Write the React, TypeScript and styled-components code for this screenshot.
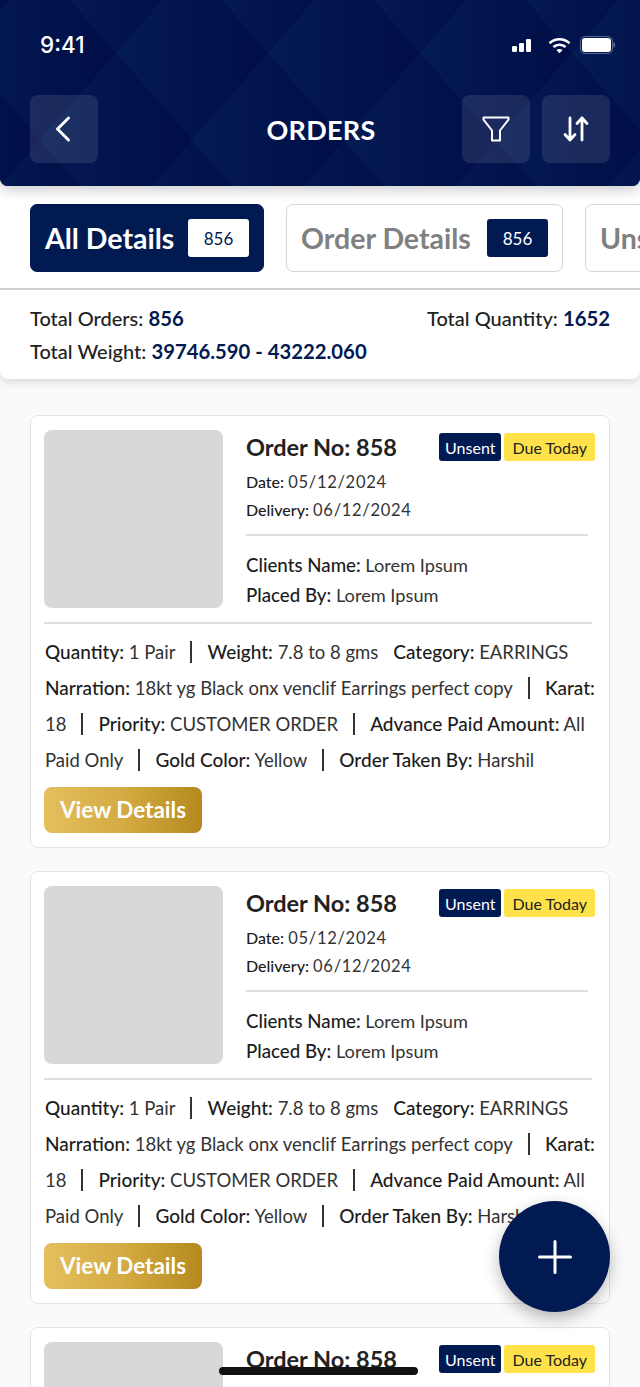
import React, { FunctionComponent } from "react";
import styled, { createGlobalStyle } from "styled-components";

const NAVY = "#021a52";

const GlobalStyle = createGlobalStyle`
  html, body {
    margin: 0;
    padding: 0;
    height: 1387px;
    overflow: hidden;
    background: #fafafa;
    font-family: "Lato", "Noto Sans", sans-serif;
  }
`;

const Screen = styled.div`
  position: relative;
  width: 640px;
  height: 1387px;
  overflow: hidden;
  background: #fafafa;
`;

const Header = styled.header`
  position: relative;
  z-index: 3;
  height: 186px;
  box-sizing: border-box;
  background: #01124b;
  border-radius: 0 0 8px 8px;
  box-shadow: 0 5px 12px rgba(0, 0, 0, 0.18);
  overflow: hidden;
`;

const HeaderPattern = styled.svg`
  position: absolute;
  inset: 0;
  width: 100%;
  height: 100%;
`;

const StatusBar = styled.div`
  position: relative;
  height: 95px;
  box-sizing: border-box;
  padding: 30px 25px 0 40px;
  display: flex;
  justify-content: space-between;
  align-items: flex-start;
`;

const Clock = styled.span`
  font-family: "Inter", "Roboto", sans-serif;
  font-size: 22.5px;
  line-height: 30px;
  font-weight: 500;
  color: #fff;
`;

const StatusIcons = styled.div`
  display: flex;
  align-items: center;
  gap: 17px;
  height: 30px;
`;

const NavRow = styled.div`
  position: relative;
  display: flex;
  align-items: center;
  justify-content: space-between;
  padding: 0 30px;
`;

const NavGroup = styled.div`
  display: flex;
  gap: 12px;
`;

const NavButton = styled.button`
  width: 68px;
  height: 68px;
  padding: 0;
  border: none;
  border-radius: 8px;
  background: rgba(255, 255, 255, 0.1);
  display: flex;
  align-items: center;
  justify-content: center;
`;

const Title = styled.h1`
  position: absolute;
  left: 0;
  right: 0;
  top: 1px;
  margin: 0;
  text-align: center;
  padding-left: 2px;
  font-size: 27px;
  line-height: 68px;
  font-weight: 700;
  letter-spacing: 0.3px;
  color: #fff;
  pointer-events: none;
`;

const SummaryPanel = styled.section`
  position: relative;
  z-index: 2;
  background: #fff;
  height: 193px;
  border-radius: 0 0 8px 8px;
  box-shadow: 0 3px 10px rgba(0, 0, 0, 0.14);
`;

const TabStrip = styled.div`
  display: flex;
  gap: 22px;
  height: 104px;
  box-sizing: border-box;
  padding: 18px 0 0 30px;
  overflow: hidden;
  border-bottom: 2px solid #cfcfcf;
`;

const Tab = styled.div<{ $active?: boolean }>`
  flex: none;
  height: 68px;
  box-sizing: border-box;
  padding: 0 14px;
  display: flex;
  align-items: center;
  justify-content: space-between;
  border-radius: 7px;
  border: 1.5px solid ${(p) => (p.$active ? NAVY : "#d6d6d6")};
  background: ${(p) => (p.$active ? NAVY : "#fff")};
  color: ${(p) => (p.$active ? "#fff" : "#808080")};
  width: ${(p) => (p.$active ? "234px" : "277px")};
`;

const TabLabel = styled.span`
  font-size: 28.5px;
  font-weight: 700;
  white-space: nowrap;
`;

const TabCount = styled.span<{ $active?: boolean }>`
  width: 61px;
  height: 38px;
  border-radius: 3px;
  display: flex;
  align-items: center;
  justify-content: center;
  font-size: 17px;
  background: ${(p) => (p.$active ? "#fff" : NAVY)};
  color: ${(p) => (p.$active ? NAVY : "#fff")};
`;

const Totals = styled.div`
  padding: 12px 30px 0;
  font-size: 20px;
  line-height: 33px;
  font-weight: 500;
  color: #222;
`;

const TotalsRow = styled.div`
  display: flex;
  justify-content: space-between;
`;

const TotalValue = styled.span`
  font-size: 20.3px;
  font-weight: 700;
  color: ${NAVY};
`;

const CardList = styled.main`
  padding: 36px 30px 0;
  display: flex;
  flex-direction: column;
  gap: 23px;
`;

const Card = styled.article`
  flex: none;
  box-sizing: border-box;
  height: 433px;
  padding: 14px 14px 14px 13px;
  background: #fff;
  border: 1px solid #e4e4e4;
  border-radius: 8px;
`;

const CardTop = styled.div`
  display: flex;
  gap: 23px;
  height: 178px;
`;

const Thumb = styled.div`
  flex: none;
  width: 179px;
  height: 178px;
  border-radius: 8px;
  background: #d8d8d8;
`;

const Info = styled.div`
  flex: 1;
  min-width: 0;
`;

const InfoHead = styled.div`
  display: flex;
  justify-content: space-between;
  align-items: center;
  height: 34px;
  margin-bottom: 4px;
`;

const OrderNo = styled.h2`
  margin: 0;
  font-size: 23.5px;
  font-weight: 700;
  color: #222;
  white-space: nowrap;
`;

const Badges = styled.div`
  display: flex;
  gap: 3px;
`;

const Badge = styled.span<{ $tone: "navy" | "yellow" }>`
  height: 28px;
  padding: 0 ${(p) => (p.$tone === "navy" ? 6 : 8)}px;
  border-radius: 3px;
  display: flex;
  align-items: center;
  font-size: 16px;
  white-space: nowrap;
  background: ${(p) => (p.$tone === "navy" ? NAVY : "#ffe14a")};
  color: ${(p) => (p.$tone === "navy" ? "#fff" : "#222")};
`;

const DateLine = styled.div`
  font-size: 16px;
  line-height: 28px;
  color: #333;
  white-space: nowrap;
`;

const DateValue = styled.span`
  font-size: 16.5px;
  letter-spacing: 0.7px;
`;

const Rule = styled.hr<{ $above: number; $below: number; $right: number }>`
  margin: ${(p) => `${p.$above}px ${p.$right}px ${p.$below}px 0`};
  border: none;
  height: 1.5px;
  background: #dedede;
`;

const PersonLine = styled.div`
  font-size: 18.2px;
  line-height: 30px;
  color: #333;
  white-space: nowrap;
`;

const PersonLabel = styled.b`
  font-size: 18.7px;
  font-weight: 500;
  color: #1c1c1c;
`;

const Label = styled.b`
  font-weight: 500;
  color: #1c1c1c;
`;

const FactLabel = styled(Label)`
  font-size: 19px;
`;

const Facts = styled.div`
  margin-top: 10px;
  padding-left: 1px;
`;

const FactRow = styled.div`
  display: flex;
  align-items: center;
  gap: 15px;
  height: 36px;
  font-size: 18.5px;
  color: #333;
  white-space: nowrap;
`;

const Sep = styled.i`
  flex: none;
  width: 2px;
  height: 22px;
  background: #333;
`;

const ViewButton = styled.button`
  display: block;
  width: 158px;
  height: 46px;
  margin-top: 9px;
  padding: 0;
  border: none;
  border-radius: 8px;
  background: linear-gradient(90deg, #e4bf5c 0%, #d4ab42 50%, #b5891f 100%);
  color: #fff;
  font-family: inherit;
  font-size: 22.5px;
  font-weight: 700;
`;

const Fab = styled.button`
  position: absolute;
  z-index: 5;
  left: 499px;
  top: 1201px;
  width: 111px;
  height: 111px;
  padding: 0;
  border: none;
  border-radius: 50%;
  background: ${NAVY};
  box-shadow: 0 6px 16px rgba(0, 0, 0, 0.28);
  display: flex;
  align-items: center;
  justify-content: center;
`;

const HomeIndicator = styled.div`
  position: absolute;
  z-index: 4;
  left: 219px;
  top: 1367px;
  width: 199px;
  height: 8px;
  border-radius: 4px;
  background: #111;
`;

const OrderCard: FunctionComponent = () => (
  <Card>
    <CardTop>
      <Thumb />
      <Info>
        <InfoHead>
          <OrderNo>Order No: 858</OrderNo>
          <Badges>
            <Badge $tone="navy">Unsent</Badge>
            <Badge $tone="yellow">Due Today</Badge>
          </Badges>
        </InfoHead>
        <DateLine>
          <Label>Date:</Label> <DateValue>05/12/2024</DateValue>
        </DateLine>
        <DateLine>
          <Label>Delivery:</Label> <DateValue>06/12/2024</DateValue>
        </DateLine>
        <Rule $above={10} $below={14} $right={7} />
        <PersonLine>
          <PersonLabel>Clients Name:</PersonLabel> Lorem Ipsum
        </PersonLine>
        <PersonLine>
          <PersonLabel>Placed By:</PersonLabel> Lorem Ipsum
        </PersonLine>
      </Info>
    </CardTop>
    <Rule $above={14} $below={0} $right={3} />
    <Facts>
      <FactRow>
        <span>
          <FactLabel>Quantity:</FactLabel> 1 Pair
        </span>
        <Sep />
        <span>
          <FactLabel>Weight:</FactLabel> 7.8 to 8 gms
        </span>
        <span>
          <FactLabel>Category:</FactLabel> EARRINGS
        </span>
      </FactRow>
      <FactRow>
        <span>
          <FactLabel>Narration:</FactLabel> 18kt yg Black onx venclif Earrings perfect copy
        </span>
        <Sep />
        <FactLabel>Karat:</FactLabel>
      </FactRow>
      <FactRow>
        <span>18</span>
        <Sep />
        <span>
          <FactLabel>Priority:</FactLabel> CUSTOMER ORDER
        </span>
        <Sep />
        <span>
          <FactLabel>Advance Paid Amount:</FactLabel> All
        </span>
      </FactRow>
      <FactRow>
        <span>Paid Only</span>
        <Sep />
        <span>
          <FactLabel>Gold Color:</FactLabel> Yellow
        </span>
        <Sep />
        <span>
          <FactLabel>Order Taken By:</FactLabel> Harshil
        </span>
      </FactRow>
    </Facts>
    <ViewButton>View Details</ViewButton>
  </Card>
);

const diamonds: string[] = [];
for (let row = -1; row < 4; row++) {
  for (let col = -1; col < 6; col++) {
    const cx = 40 + col * 152 + (row % 2 === 0 ? 0 : 76);
    const cy = 53 + row * 87;
    diamonds.push(`${cx},${cy - 87} ${cx + 76},${cy} ${cx},${cy + 87} ${cx - 76},${cy}`);
  }
}

const App: FunctionComponent = () => (
  <Screen>
    <GlobalStyle />
    <Header>
      <HeaderPattern viewBox="0 0 640 186" preserveAspectRatio="none">
        <defs>
          <linearGradient id="diamondShade" x1="0" y1="0" x2="1" y2="0">
            <stop offset="0" stopColor="#041b54" />
            <stop offset="0.55" stopColor="#02134c" />
            <stop offset="1" stopColor="#000e47" />
          </linearGradient>
        </defs>
        {diamonds.map((points, i) => (
          <polygon key={i} points={points} fill="url(#diamondShade)" />
        ))}
      </HeaderPattern>
      <StatusBar>
        <Clock>9:41</Clock>
        <StatusIcons>
          <svg width="19" height="13" viewBox="0 0 19 13" fill="#fff">
            <rect x="0" y="7" width="5" height="6" rx="1.2" />
            <rect x="7" y="4" width="5" height="9" rx="1.2" />
            <rect x="14" y="0" width="5" height="13" rx="1.2" />
          </svg>
          <svg width="23" height="17" viewBox="0 0 23 17" fill="none" stroke="#fff" strokeWidth="2.6">
            <path d="M1.5 6.2C7.2 1 15.8 1 21.5 6.2" />
            <path d="M5.4 10C8.8 7 14.2 7 17.6 10" />
            <path d="M11.5 16.2 8.4 13c1.7-1.5 4.5-1.5 6.2 0z" fill="#fff" stroke="none" />
          </svg>
          <svg width="35" height="18" viewBox="0 0 35 18" style={{ marginLeft: -8 }}>
            <rect x="0.5" y="0.5" width="32" height="17" rx="4.5" fill="none" stroke="#fff" strokeOpacity="0.35" />
            <rect x="2" y="2" width="29" height="14" rx="3" fill="#fff" />
            <path d="M33.5 6v6c1-.4 1.5-1.6 1.5-3s-.5-2.6-1.5-3z" fill="#fff" fillOpacity="0.4" />
          </svg>
        </StatusIcons>
      </StatusBar>
      <NavRow>
        <NavButton aria-label="Back">
          <svg width="18" height="28" viewBox="0 0 18 28" fill="none" stroke="#fff" strokeWidth="3" strokeLinecap="round" strokeLinejoin="round">
            <path d="M13.5 3 2.5 14l11 11" />
          </svg>
        </NavButton>
        <Title>ORDERS</Title>
        <NavGroup>
          <NavButton aria-label="Filter">
            <svg width="28" height="26" viewBox="0 0 28 26" fill="none" stroke="#fff" strokeWidth="2" strokeLinejoin="round">
              <path d="M1.5 1.5h25v2.2L18 14.5v10h-8v-10L1.5 3.7z" />
            </svg>
          </NavButton>
          <NavButton aria-label="Sort">
            <svg width="26" height="26" viewBox="0 0 26 26" fill="none" stroke="#fff" strokeWidth="2.8" strokeLinecap="round" strokeLinejoin="round">
              <path d="M7 2v22M2 18.5 7 24l5-5.500" />
              <path d="M19 24V2M14 7.500 19 2l5 5.500" />
            </svg>
          </NavButton>
        </NavGroup>
      </NavRow>
    </Header>
    <SummaryPanel>
      <TabStrip>
        <Tab $active>
          <TabLabel>All Details</TabLabel>
          <TabCount $active>856</TabCount>
        </Tab>
        <Tab>
          <TabLabel>Order Details</TabLabel>
          <TabCount>856</TabCount>
        </Tab>
        <Tab>
          <TabLabel>Unsent</TabLabel>
          <TabCount>856</TabCount>
        </Tab>
      </TabStrip>
      <Totals>
        <TotalsRow>
          <span>
            Total Orders: <TotalValue>856</TotalValue>
          </span>
          <span>
            Total Quantity: <TotalValue>1652</TotalValue>
          </span>
        </TotalsRow>
        <div>
          Total Weight: <TotalValue>39746.590 - 43222.060</TotalValue>
        </div>
      </Totals>
    </SummaryPanel>
    <CardList>
      <OrderCard />
      <OrderCard />
      <OrderCard />
    </CardList>
    <Fab aria-label="Add">
      <svg width="36" height="36" viewBox="0 0 36 36" stroke="#fff" strokeWidth="3" strokeLinecap="round">
        <path d="M18 2.500v31M2.500 18h31" />
      </svg>
    </Fab>
    <HomeIndicator />
  </Screen>
);

export default App;
